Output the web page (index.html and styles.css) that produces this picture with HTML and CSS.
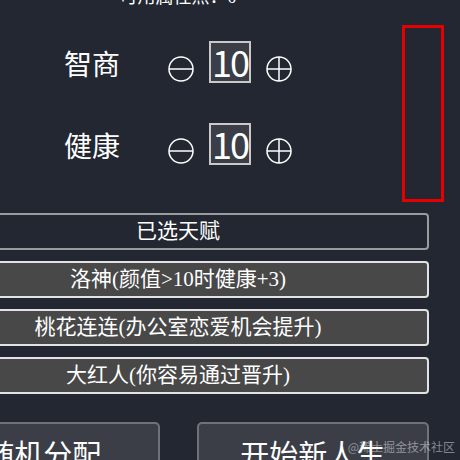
FILE: index.html
```html
<!DOCTYPE html>
<html lang="zh-CN">

<head>
    <meta charset="UTF-8">
    <meta name="viewport" content="width=device-width, initial-scale=1.0">
    <title>人生重开模拟器</title>
    <link rel="stylesheet" href="styles.css">
</head>

<body>

    <div class="page">
        <div class="points">可用属性点：0</div>

        <div class="stat">
            <span class="stat-name">智商</span>
            <button class="step">
                <svg viewBox="0 0 26 26" width="26" height="26"><circle cx="13" cy="13" r="12" /><line x1="1" y1="13" x2="25" y2="13" /></svg>
            </button>
            <span class="stat-value">10</span>
            <button class="step">
                <svg viewBox="0 0 26 26" width="26" height="26"><circle cx="13" cy="13" r="12" /><line x1="1" y1="13" x2="25" y2="13" /><line x1="13" y1="1" x2="13" y2="25" /></svg>
            </button>
        </div>

        <div class="stat">
            <span class="stat-name">健康</span>
            <button class="step">
                <svg viewBox="0 0 26 26" width="26" height="26"><circle cx="13" cy="13" r="12" /><line x1="1" y1="13" x2="25" y2="13" /></svg>
            </button>
            <span class="stat-value">10</span>
            <button class="step">
                <svg viewBox="0 0 26 26" width="26" height="26"><circle cx="13" cy="13" r="12" /><line x1="1" y1="13" x2="25" y2="13" /><line x1="13" y1="1" x2="13" y2="25" /></svg>
            </button>
        </div>

        <div class="talents">
            <div class="talent-title">已选天赋</div>
            <div class="talent">洛神(颜值&gt;10时健康+3)</div>
            <div class="talent">桃花连连(办公室恋爱机会提升)</div>
            <div class="talent">大红人(你容易通过晋升)</div>
        </div>

        <div class="actions">
            <button class="action">随机分配</button>
            <button class="action">开始新人生</button>
        </div>
    </div>

    <div class="scroll-box"></div>

    <div class="watermark">@稀土掘金技术社区</div>

</body>

</html>
```

FILE: styles.css
```css
html,
body {
    height: 100%;
}

body {
    margin: 0;
    overflow: hidden;
    background-color: #222731;
    color: #fff;
    font-family: "Liberation Serif", "Noto Sans CJK SC", serif;
}

.page {
    width: 502px;
    margin-left: -73px;
}

.points {
    margin-top: -15px;
    height: 24px;
    line-height: 24px;
    font-size: 18px;
    text-align: center;
}

.stat {
    display: flex;
    align-items: center;
    justify-content: center;
    height: 42px;
    margin-top: 32px;
}

.stat + .stat {
    margin-top: 40px;
}

.stat-name {
    width: 56px;
    margin-right: 48px;
    padding-top: 8px;
    font-size: 28px;
    line-height: 42px;
    white-space: nowrap;
}

.step {
    width: 26px;
    height: 26px;
    margin-top: 14px;
    padding: 0;
    border: none;
    background: none;
    cursor: pointer;
}

.step svg {
    display: block;
    fill: none;
    stroke: #fff;
    stroke-width: 1.5;
}

.stat-value {
    box-sizing: border-box;
    width: 42px;
    height: 42px;
    margin: 0 15px;
    border: 2px solid #c9c9c9;
    background-color: #3b3e47;
    font-family: "Noto Sans CJK SC", sans-serif;
    font-size: 36px;
    line-height: 36px;
    letter-spacing: -2px;
    text-align: center;
}

.talents {
    display: flex;
    flex-direction: column;
    gap: 11px;
    margin-top: 48px;
}

.talent-title,
.talent {
    box-sizing: border-box;
    height: 37px;
    border: 2px solid #9a9b9f;
    border-radius: 4px;
    font-size: 21px;
    line-height: 33px;
    text-align: center;
    white-space: nowrap;
}

.talent {
    border-color: #e2e2e2;
    background-color: #484848;
}

.actions {
    display: grid;
    grid-template-columns: 1fr 1fr;
    gap: 37px;
    margin-top: 28px;
}

.action {
    height: 62px;
    border: 2px solid #6f727a;
    border-radius: 5px;
    background-color: #3b3e47;
    color: #fff;
    font-family: "Liberation Serif", "Noto Sans CJK SC", serif;
    font-size: 29px;
    cursor: pointer;
}

.scroll-box {
    position: absolute;
    top: 25px;
    left: 402px;
    width: 36px;
    height: 171px;
    border: 3px solid #e60000;
}

.watermark {
    position: absolute;
    right: 5px;
    bottom: 5px;
    font-family: "Noto Sans CJK SC", sans-serif;
    font-size: 12px;
    color: rgba(255, 255, 255, 0.45);
}
```
